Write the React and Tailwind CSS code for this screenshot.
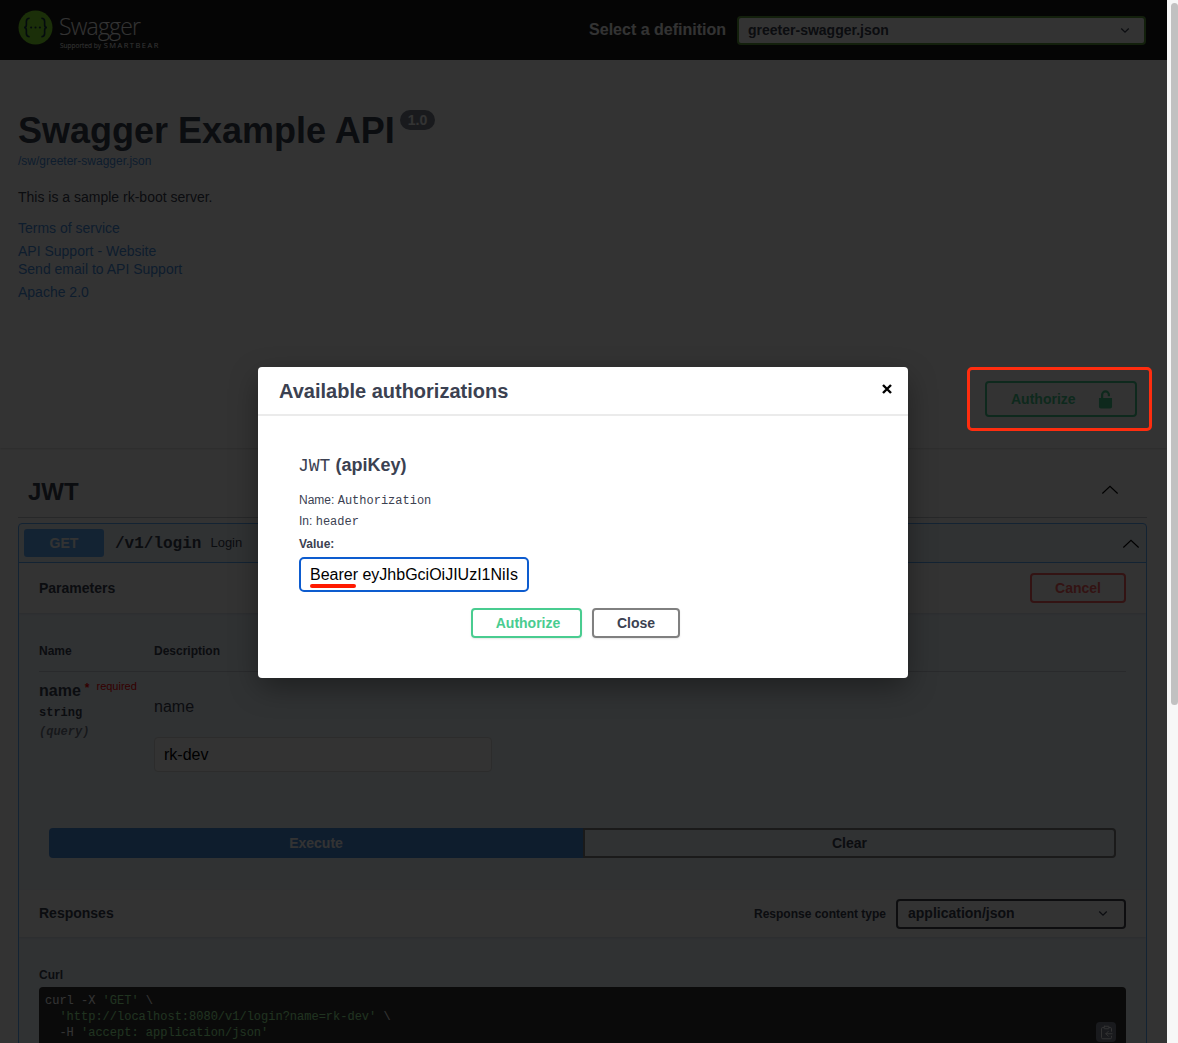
import React from 'react';
import { ClipboardCopy } from 'lucide-react';

const sans = 'font-["Liberation_Sans",Arial,sans-serif]';
const mono = 'font-["Liberation_Mono",monospace]';

const Chevron = ({ className }) => (
    <svg viewBox="0 0 20 10" fill="none" stroke="currentColor" strokeWidth="1.3" className={className}>
        <path d="M1.5 9.5 10 1.5l8.5 8" />
    </svg>
);

const SelectArrow = ({ className }) => (
    <svg viewBox="0 0 12 8" fill="none" stroke="currentColor" strokeWidth="1.6" className={className}>
        <path d="M1.5 1.5 6 6l4.5-4.5" />
    </svg>
);

const Logo = () => (
    <svg viewBox="0 0 36 36" className="w-[35px] h-[35px] shrink-0">
        <circle cx="18" cy="18" r="17.5" fill="#85ea2d" />
        <g fill="none" stroke="#173647" strokeWidth="1.7">
            <path d="M12 8.5c-2.6 0-3.4 1.2-3.4 3.4v3.4c0 1.6-.9 2.7-2.4 2.7 1.5 0 2.4 1.1 2.4 2.7v3.4c0 2.2.8 3.4 3.4 3.4" />
            <path d="M24 8.5c2.6 0 3.4 1.2 3.4 3.4v3.4c0 1.6.9 2.7 2.4 2.7-1.5 0-2.4 1.1-2.4 2.7v3.4c0 2.2-.8 3.4-3.4 3.4" />
        </g>
        <g fill="#173647">
            <circle cx="13.5" cy="18" r="1.1" /><circle cx="18" cy="18" r="1.1" /><circle cx="22.5" cy="18" r="1.1" />
        </g>
    </svg>
);

const Lock = () => (
    <svg viewBox="0 0 16 20" className="w-[15px] h-[19px]" fill="#49cc90">
        <path d="M1 8.5h14v9a2 2 0 0 1-2 2H3a2 2 0 0 1-2-2z" />
        <path d="M3.2 8.5V5a4.8 4.8 0 0 1 9.6 0v1.4h-2.4V5a2.4 2.4 0 0 0-4.8 0v3.5z" />
    </svg>
);

const Header = () => (
    <div className="h-[60px] bg-[#1b1b1b] flex items-start pt-[10px] pl-[18px] pr-[21px] shrink-0">
        <div className="flex items-start gap-[6px]">
            <Logo />
            <div className="flex flex-col mt-[3px]">
                <span className='font-["Open_Sans",sans-serif] font-light text-[23px] leading-[26px] tracking-[-0.8px] text-white'>Swagger</span>
                <span className='font-["Open_Sans",sans-serif] text-[6.5px] leading-[8px] mt-[2px] ml-[1px] text-white whitespace-nowrap'>Supported by <span className="text-[7.5px] ml-[1px] tracking-[1.5px]">SMARTBEAR</span></span>
            </div>
        </div>
        <div className="ml-auto flex items-center gap-[11px] h-[40px]">
            <span className="text-white font-bold text-[16px]">Select a definition</span>
            <div className="w-[409px] h-[29px] border-2 border-[#62a03f] rounded-[4px] bg-white flex items-center justify-between pl-[9px] pr-[14px]">
                <span className="text-[#3b4151] font-bold text-[14px]">greeter-swagger.json</span>
                <SelectArrow className="w-[10px] h-[7px] text-[#3b4151]" />
            </div>
        </div>
    </div>
);

const Info = () => (
    <div className="pl-[18px] pt-[50px] h-[287px] shrink-0 text-[#3b4151]">
        <div className="flex items-start h-[42px]">
            <h2 className="text-[36px] leading-[42px] font-bold">Swagger Example API</h2>
            <span className="ml-[5px] mt-0 h-[20px] px-[8px] rounded-[10px] bg-[#7d8492] text-white font-bold text-[14px] leading-[20px]">1.0</span>
        </div>
        <div className="text-[12px] leading-[16px] mt-[1px] text-[#4990e2]">/sw/greeter-swagger.json</div>
        <p className="text-[14px] leading-[16px] mt-[20px]">This is a sample rk-boot server.</p>
        <div className="text-[14px] leading-[18px] text-[#4990e2] mt-[14px] flex flex-col">
            <span>Terms of service</span>
            <span className="mt-[5px]">API Support - Website</span>
            <span>Send email to API Support</span>
            <span className="mt-[5px]">Apache 2.0</span>
        </div>
    </div>
);

const Schemes = () => (
    <div className="h-[101px] shrink-0 bg-white shadow-[0_1px_2px_0_rgba(0,0,0,0.15)] flex items-center justify-end pr-[30px] pt-[3px]">
        <div className="w-[152px] h-[36px] border-2 border-[#49cc90] rounded-[4px] flex items-center pl-[24px] pr-[22px] justify-between text-[#49cc90] font-bold text-[14px]">
            <span>Authorize</span>
            <Lock />
        </div>
    </div>
);

const Operation = () => (
    <div className="mt-[5px] border border-[#61affe] rounded-[4px] bg-[#61affe]/10 h-[600px] overflow-hidden">
        <div className="h-[39px] border-b border-[#61affe] flex items-center pl-[5px] pr-[6px] shrink-0">
            <div className="w-[80px] h-[28px] bg-[#61affe] rounded-[3px] text-white font-bold text-[14px] flex items-center justify-center">GET</div>
            <span className={`${mono} font-bold text-[16px] text-[#3b4151] ml-[11px] pt-[2px]`}>/v1/login</span>
            <span className="text-[13px] text-[#3b4151] ml-[9px]">Login</span>
            <Chevron className="ml-auto w-[18px] h-[9px] text-[#000]" />
        </div>
        <div className="h-[50px] bg-white/80 shadow-[0_1px_2px_rgba(0,0,0,0.1)] flex items-center justify-between pl-[20px] pr-[20px]">
            <span className="font-bold text-[14px] text-[#3b4151]">Parameters</span>
            <div className="w-[96px] h-[30px] border-2 border-[#ff6060] rounded-[4px] text-[#ff6060] font-bold text-[14px] flex items-center justify-center">Cancel</div>
        </div>
        <div className="px-[20px] pt-[30px]">
            <div className="flex h-[29px] border-b border-[#3b4151]/20 text-[#3b4151] font-bold text-[12px] leading-[16px]">
                <span className="w-[115px]">Name</span>
                <span>Description</span>
            </div>
            <div className="flex pt-[9px] text-[#3b4151]">
                <div className="w-[115px] shrink-0">
                    <div className="flex items-start h-[20px]">
                        <span className="font-bold text-[16px] leading-[20px]">name</span>
                        <span className="text-[#ff0000] ml-[4px] whitespace-nowrap flex items-start">
                            <span className="font-bold text-[12px] leading-[14px]">*</span>
                            <span className="text-[11px] leading-[10px] ml-[7px]">required</span>
                        </span>
                    </div>
                    <div className={`${mono} font-bold text-[12px] leading-[14px] mt-[5px]`}>string</div>
                    <div className={`${mono} font-bold italic text-[12px] leading-[14px] mt-[5px] text-[#3b4151]/70`}>(query)</div>
                </div>
                <div className="pt-[17px]">
                    <div className="text-[16px] leading-[18px]">name</div>
                    <input readOnly value="rk-dev" className="mt-[21px] w-[338px] h-[35px] border border-[#d9d9d9] rounded-[4px] bg-white px-[9px] text-[16px] text-black outline-none" />
                </div>
            </div>
            <div className="flex mx-[10px] mt-[56px] h-[30px]">
                <div className="w-[534px] bg-[#4990e2] border-2 border-[#4990e2] rounded-l-[4px] text-white font-bold text-[14px] flex items-center justify-center">Execute</div>
                <div className="flex-1 border-2 border-[#808080] rounded-r-[4px] text-[#3b4151] font-bold text-[14px] flex items-center justify-center">Clear</div>
            </div>
        </div>
        <div className="mt-[32px] h-[47px] bg-white/80 shadow-[0_1px_2px_rgba(0,0,0,0.1)] flex items-center pl-[20px] pr-[20px] text-[#3b4151]">
            <span className="font-bold text-[14px]">Responses</span>
            <span className="ml-auto font-bold text-[12px]">Response content type</span>
            <div className="ml-[10px] w-[230px] h-[30px] border-2 border-[#41444e] rounded-[4px] bg-white flex items-center justify-between pl-[10px] pr-[16px]">
                <span className="font-bold text-[14px]">application/json</span>
                <SelectArrow className="w-[10px] h-[7px]" />
            </div>
        </div>
        <div className="px-[20px] pt-[31px]">
            <div className="font-bold text-[12px] leading-[14px] text-[#3b4151]">Curl</div>
            <div className={`relative mt-[5px] bg-[#333] rounded-[4px] h-[120px] pt-[6px] pl-[6px] ${mono} text-[12px] leading-[16px] whitespace-pre text-white`}>
                <div>curl -X <span className="text-[#a2fca2]">'GET'</span> \</div>
                <div>  <span className="text-[#a2fca2]">'http://localhost:8080/v1/login?name=rk-dev'</span> \</div>
                <div>  -H <span className="text-[#a2fca2]">'accept: application/json'</span></div>
                <div className="absolute left-[1057px] top-[35px] w-[20px] h-[20px] rounded-[4px] bg-[#7d8293] flex items-center justify-center">
                    <ClipboardCopy className="w-[15px] h-[15px] text-white" strokeWidth={1.5} />
                </div>
            </div>
        </div>
    </div>
);

const Tag = () => (
    <div className="pl-[18px] pr-[20px] pt-[18px]">
        <div className="h-[52px] border-b border-[#3b4151]/30 flex items-center justify-between pl-[10px] pr-[28px]">
            <h3 className="text-[24px] font-bold text-[#3b4151]">JWT</h3>
            <Chevron className="w-[18px] h-[9px] text-black -mt-[4px]" />
        </div>
        <Operation />
    </div>
);

const AuthModal = () => (
    <div className="w-[650px] h-[311px] bg-white rounded-[4px] shadow-[0_10px_30px_-2px_rgba(0,0,0,0.4)] text-[#3b4151]">
        <div className="h-[49px] border-b-2 border-[#ebebeb] flex items-center justify-between pl-[21px] pr-[16px]">
            <h3 className="text-[20px] font-bold">Available authorizations</h3>
            <svg viewBox="0 0 10 10" className="w-[10px] h-[10px] -mt-[3px]" fill="none" stroke="#000" strokeWidth="2.4">
                <path d="M1 1l8 8M9 1l-8 8" />
            </svg>
        </div>
        <div className="pl-[41px] pt-[38px]">
            <h4 className="text-[18px] leading-[22px] font-bold whitespace-nowrap -ml-[1px]">
                <span className={`${mono} font-normal text-[18px]`}>JWT</span> (apiKey)
            </h4>
            <div className="text-[12px] leading-[14px] mt-[16px]">Name: <span className={mono}>Authorization</span></div>
            <div className="text-[12px] leading-[14px] mt-[6px]">In: <span className={mono}>header</span></div>
            <div className="text-[12px] leading-[14px] font-bold mt-[8px]">Value:</div>
            <div className="relative mt-[6px] w-[230px]">
                <input readOnly value="Bearer eyJhbGciOiJIUzI1NiIs" className="w-[230px] h-[35px] border-2 border-[#0d5ccf] rounded-[5px] px-[9px] text-[16px] text-black outline-none" />
                <div className="absolute left-[11px] top-[27px] w-[46px] h-[4px] rounded-full bg-[#ff1a00]" />
            </div>
            <div className="flex gap-[10px] ml-[172px] mt-[16px]">
                <div className="w-[111px] h-[30px] border-2 border-[#49cc90] rounded-[4px] pl-[3px] text-[#49cc90] font-bold text-[14px] shadow-[0_1px_2px_rgba(0,0,0,0.1)] flex items-center justify-center">Authorize</div>
                <div className="w-[88px] h-[30px] border-2 border-[#808080] rounded-[4px] font-bold text-[14px] shadow-[0_1px_2px_rgba(0,0,0,0.1)] flex items-center justify-center">Close</div>
            </div>
        </div>
    </div>
);

const App = () => (
    <div className={`h-[1043px] overflow-hidden flex bg-[#f7f7f7] ${sans}`}>
        <div className="relative w-[1167px] h-[1043px] overflow-hidden bg-white shrink-0">
            <Header />
            <Info />
            <Schemes />
            <Tag />
            <div className="absolute inset-0 bg-black/80 flex justify-center pt-[367px] pr-[1px]">
                <AuthModal />
            </div>
            {/* red annotation box from the screenshot */}
            <div className="absolute left-[967px] top-[367px] w-[185px] h-[64px] border-[3px] border-[#ff2d0f] rounded-[5px]" />
        </div>
        <div className="flex-1 pl-[4px] pt-[3px]">
            <div className="h-[702px] rounded-[4px] bg-[#c1c1c1]" />
        </div>
    </div>
);

export default App;
